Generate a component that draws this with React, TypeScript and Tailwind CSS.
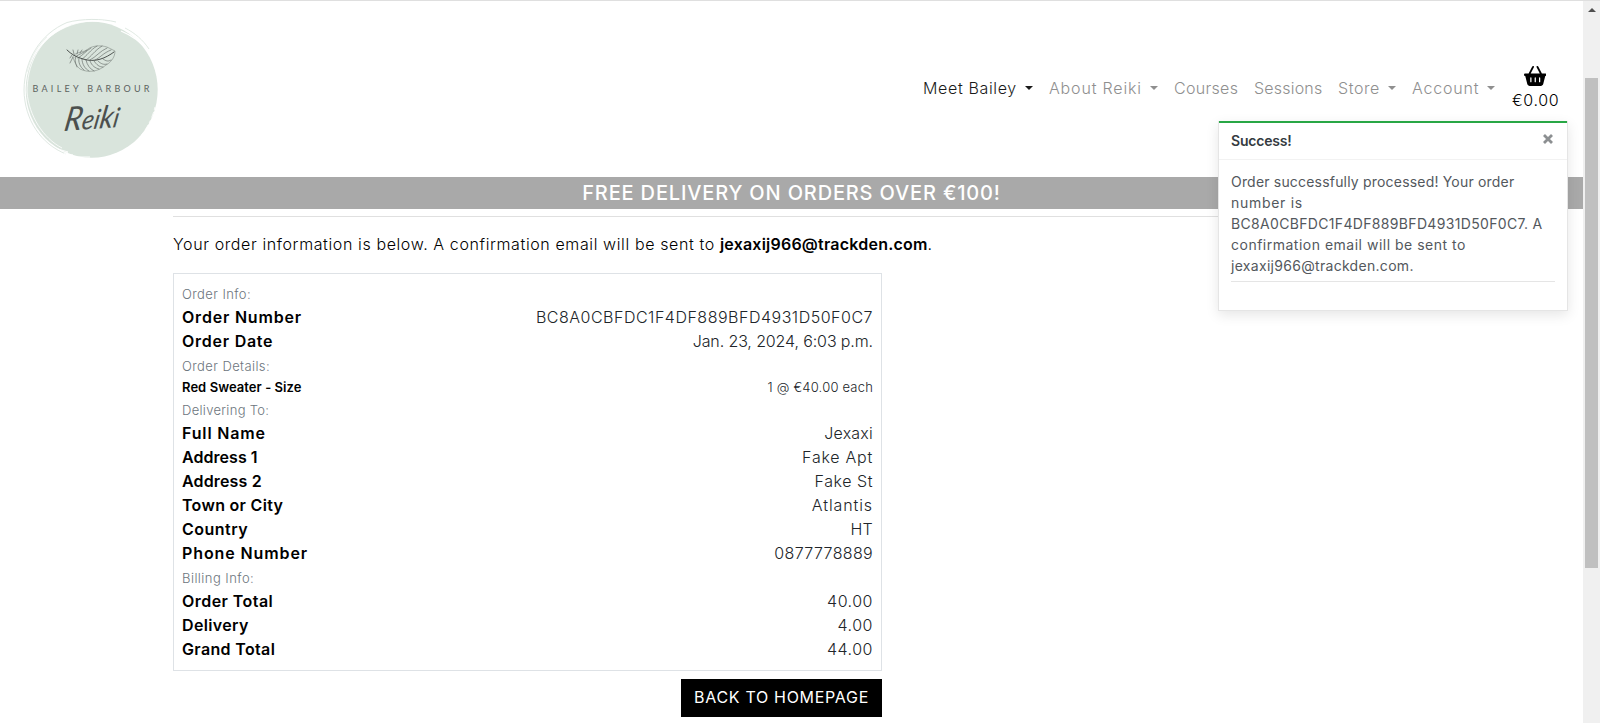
import { FaBasketShopping } from "react-icons/fa6";

function Logo() {
  return (
    <svg className="h-[160px] w-[180px]" viewBox="0 0 180 160" fill="none">
      <g transform="translate(0 -9)">
        <ellipse cx="91.700" cy="89.800" rx="66" ry="68" fill="#d9e4dc" />
        <path d="M121 31 C133 36 142 43 149 52" stroke="#ffffff" strokeWidth="1.3" />
        <path d="M125 28 C135 33 143 40 149 49" stroke="#d9e4dc" strokeWidth="0.8" />
        <path d="M66 154 C41 144 24.500 120 24 90 C24.500 60 40 34 67 22.500 C82 18.500 102 18.500 116 22" stroke="#dfe8e2" strokeWidth="1" />
        <path d="M62 148 C43 138 29 116 27 92 C27 66 38 42 60 30 C75 22 88 20.500 103 21" stroke="#ffffff" strokeWidth="0.8" />
        <path d="M27 72 C31 56 38 46 47 37" stroke="#e8efea" strokeWidth="0.8" />
        <path d="M58 149 l10 3 -4 2 9 1 -3 2 20 0" stroke="#ffffff" strokeWidth="0.9" />
        <path d="M155 107 C152 120 145 132 137 140" stroke="#ffffff" strokeWidth="0.8" strokeDasharray="3 2 6 3" />
        <g stroke="#59605c" strokeWidth="0.6" strokeLinecap="round">
          <path d="M67 50 C71 54 76 57 83 59 C95 63 106 58 114 52" strokeWidth="0.9" stroke="#3d4240" />
          <path d="M73 56 C77 51 84 53 88 49 C93 45 104 45 109 48 L115 51 C115 58 110 63 106 65 C98 72 88 73 80 69 C76 66 74 61 73 57" strokeWidth="0.4" />
          <path d="M75 57 C79 54 84 53 87 50" />
          <path d="M78 58 C83 55 86 51 91 48" />
          <path d="M82 59 C87 56 90 50 97 46" />
          <path d="M86 60 C92 56 94 51 102 46" />
          <path d="M90 60 C96 57 100 51 107 48" />
          <path d="M95 60 C100 58 103 53 111 50" />
          <path d="M76 57 C74 60 76 64 77 67" />
          <path d="M79 58 C78 62 80 67 84 70" />
          <path d="M82 59 C82 64 85 69 89 71" />
          <path d="M86 60 C87 65 90 69 94 71" />
          <path d="M90 61 C92 66 95 68 99 69" />
          <path d="M94 61 C97 65 99 67 103 67" />
          <path d="M98 61 C101 64 104 65 107 64" />
          <path d="M103 59 C106 61 108 62 111 60" />
          <path d="M72 55 L70 58 M73 57 L70 63 M74 54 L73 50 M77 54 L78 50 M80 53 L82 50" />
        </g>
        <text x="32.500" y="92" textLength="117" fontSize="9" fontFamily="Lato" fontWeight="400" fill="#5c625f">
          BAILEY BARBOUR
        </text>
        <g transform="translate(63 131) rotate(-4) skewX(-14)">
          <text x="0" y="0" textLength="55" lengthAdjust="spacingAndGlyphs" fontSize="27" fontFamily="Lato" fontStyle="italic" fontWeight="400" fill="#4c504e">
            <tspan fontSize="33">R</tspan>ei<tspan fontSize="31">k</tspan>i
          </text>
        </g>
      </g>
    </svg>
  );
}

function Caret() {
  return <span className="ml-2 border-x-[4.8px] border-t-[4.8px] border-x-transparent border-t-current" />;
}

type NavItem = { label: string; box: string; track: string; caret?: boolean; active?: boolean };

const nav: NavItem[] = [
  { label: "Meet Bailey", box: "w-[126px]", track: "tracking-[0.65px]", caret: true, active: true },
  { label: "About Reiki", box: "w-[125px]", track: "tracking-[0.83px]", caret: true },
  { label: "Courses", box: "w-[80px]", track: "tracking-[0.3px]" },
  { label: "Sessions", box: "w-[84px]", track: "tracking-[0.2px]" },
  { label: "Store", box: "w-[74px]", track: "tracking-[0.6px]", caret: true },
  { label: "Account", box: "w-[100px]", track: "tracking-[0.8px]", caret: true },
];

type Row = { label: string; value: string; lt: string; vt: string; small?: boolean };
type Section = { title: string; track: string; rows: Row[] };

const sections: Section[] = [
  {
    title: "Order Info:",
    track: "tracking-[0.4px]",
    rows: [
      { label: "Order Number", value: "BC8A0CBFDC1F4DF889BFD4931D50F0C7", lt: "tracking-[0.8px]", vt: "tracking-[0.51px]" },
      { label: "Order Date", value: "Jan. 23, 2024, 6:03 p.m.", lt: "tracking-[0.75px]", vt: "tracking-[-0.12px]" },
    ],
  },
  {
    title: "Order Details:",
    track: "tracking-[0.4px]",
    rows: [{ label: "Red Sweater - Size", value: "1 @ €40.00 each", lt: "tracking-[0.06px]", vt: "tracking-[0.2px]", small: true }],
  },
  {
    title: "Delivering To:",
    track: "tracking-[0.3px]",
    rows: [
      { label: "Full Name", value: "Jexaxi", lt: "tracking-[0.85px]", vt: "tracking-[0.2px]" },
      { label: "Address 1", value: "Fake Apt", lt: "tracking-[0.05px]", vt: "tracking-[0.75px]" },
      { label: "Address 2", value: "Fake St", lt: "tracking-[0.15px]", vt: "tracking-[0.55px]" },
      { label: "Town or City", value: "Atlantis", lt: "tracking-[0.3px]", vt: "tracking-[0.9px]" },
      { label: "Country", value: "HT", lt: "tracking-[0.5px]", vt: "tracking-[0.2px]" },
      { label: "Phone Number", value: "0877778889", lt: "tracking-[0.9px]", vt: "tracking-[0.35px]" },
    ],
  },
  {
    title: "Billing Info:",
    track: "tracking-[0.45px]",
    rows: [
      { label: "Order Total", value: "40.00", lt: "tracking-[0.45px]", vt: "tracking-[0.5px]" },
      { label: "Delivery", value: "4.00", lt: "tracking-[0.35px]", vt: "tracking-[0.5px]" },
      { label: "Grand Total", value: "44.00", lt: "tracking-[0.35px]", vt: "tracking-[0.5px]" },
    ],
  },
];

function OrderRow({ row }: { row: Row }) {
  return (
    <div className={row.small ? "flex h-5 items-center justify-between text-[13px]" : "flex h-6 items-center justify-between pb-0.5 text-base"}>
      <span className={`font-semibold ${row.lt}`}>{row.label}</span>
      <span className={`font-light text-[#212529] ${row.vt}`}>{row.value}</span>
    </div>
  );
}

function Toast() {
  return (
    <div className="absolute top-[121px] left-[1218px] h-[190px] w-[350px] border-x border-b border-black/10 bg-white shadow-[0_4px_12px_rgba(0,0,0,0.1)]">
      <div className="flex h-[39px] justify-between border-t-2 border-b border-t-[#28a745] border-b-black/5 px-3">
        <span className="pt-[7px] text-sm leading-[21px] font-semibold tracking-[-0.2px] text-[#343a40]">Success!</span>
        <svg className="mt-[11px] mr-[2px] h-[10px] w-[10px]" viewBox="0 0 10 10" stroke="#8c8f91" strokeWidth="2.800">
          <path d="M1 1 L9 9 M9 1 L1 9" />
        </svg>
      </div>
      <div className="px-3 pt-[11px] text-sm leading-[21px] text-[#53585d]">
        <p className="tracking-[0.19px]">Order successfully processed! Your order</p>
        <p className="tracking-[0.7px]">number is</p>
        <p className="tracking-[0.33px] whitespace-nowrap">BC8A0CBFDC1F4DF889BFD4931D50F0C7. A</p>
        <p className="tracking-[0.5px]">confirmation email will be sent to</p>
        <p className="tracking-[0.3px]">jexaxij966@trackden.com.</p>
        <hr className="mt-[5px] border-black/10" />
      </div>
    </div>
  );
}

export default function App() {
  return (
    <div className="relative flex h-[723px] w-[1600px] overflow-hidden bg-white font-['Inter',sans-serif] text-black">
      <div className="w-[1583px] border-t border-[#dfdfdf]">
        <header className="flex h-[176px] items-center justify-between">
          <Logo />
          <nav className="flex items-center">
            {nav.map((n) => (
              <a
                key={n.label}
                className={`flex items-center pb-0.5 font-light whitespace-nowrap ${n.box} ${n.track} ${n.active ? "text-[#1a1a1a]" : "text-[#8f8f8f]"}`}
              >
                {n.label}
                {n.caret && <Caret />}
              </a>
            ))}
            <a className="flex w-[71px] flex-col items-start">
              <FaBasketShopping className="mt-px ml-[11.5px] h-5 w-[22.500px]" />
              <span className="mt-0.5 mb-px text-base leading-6 font-light tracking-[0.6px]">€0.00</span>
            </a>
          </nav>
        </header>
        <div className="flex h-8 items-center justify-center bg-[#a9a9a9] text-xl font-medium tracking-[0.84px] text-white">
          FREE DELIVERY ON ORDERS OVER €100!
        </div>
        <main className="mx-[173px] pt-[7px]">
          <hr className="border-[#e0e0e0]" />
          <p className="mt-[15px] mb-[17px] h-6 text-base leading-6 font-light whitespace-nowrap">
            <span className="tracking-[0.61px]">Your order information is below. A confirmation email will be sent to </span>
            <strong className="font-semibold tracking-[0.22px]">jexaxij966@trackden.com</strong>.
          </p>
          <div className="w-[709px]">
            <section className="border border-[#dee2e6] p-2">
              {sections.map((s) => (
                <div key={s.title}>
                  <h2 className={`flex h-6 items-center pt-0.5 text-[13px] font-light text-[#6c757d] ${s.track}`}>{s.title}</h2>
                  {s.rows.map((r) => (
                    <OrderRow key={r.label} row={r} />
                  ))}
                </div>
              ))}
            </section>
            <div className="mt-2 flex justify-end">
              <button className="flex h-[38px] w-[201px] items-center justify-center bg-black pb-0.5 text-base tracking-[0.7px] text-white">
                BACK TO HOMEPAGE
              </button>
            </div>
          </div>
        </main>
      </div>
      <div className="flex w-[17px] flex-col items-center border-t border-[#dfdfdf] bg-[#f0f0f0]">
        <svg className="mt-[7px] h-[4px] w-[8px]" viewBox="0 0 8 4" fill="#505050">
          <path d="M4 0 L8 4 H0 Z" />
        </svg>
        <div className="mt-[66px] h-[490px] w-[13px] bg-[#c0c0c0]" />
      </div>
      <Toast />
    </div>
  );
}
